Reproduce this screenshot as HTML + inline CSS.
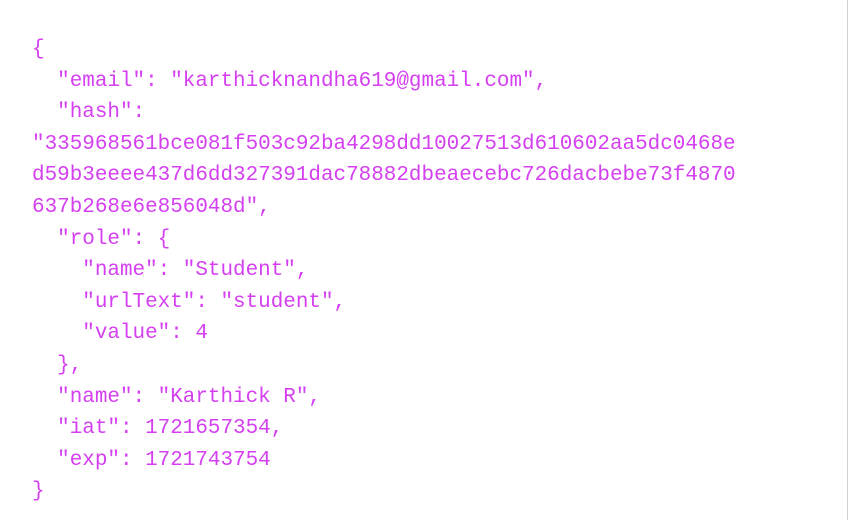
<!DOCTYPE html>
<html><head><style>
html,body{margin:0;padding:0;background:#fff;width:864px;height:520px;overflow:hidden}
.v{position:absolute;left:847px;top:0;width:1px;height:520px;background:#d0d0d0}
pre{position:absolute;left:32px;top:34px;margin:0;font-family:"Liberation Mono",monospace;font-size:20.95px;line-height:31.6px;color:#d43ff0;white-space:pre}
</style></head><body>
<div class="v"></div>
<pre>{
  "email": "karthicknandha619@gmail.com",
  "hash":
"335968561bce081f503c92ba4298dd10027513d610602aa5dc0468e
d59b3eeee437d6dd327391dac78882dbeaecebc726dacbebe73f4870
637b268e6e856048d",
  "role": {
    "name": "Student",
    "urlText": "student",
    "value": 4
  },
  "name": "Karthick R",
  "iat": 1721657354,
  "exp": 1721743754
}</pre>
</body></html>
